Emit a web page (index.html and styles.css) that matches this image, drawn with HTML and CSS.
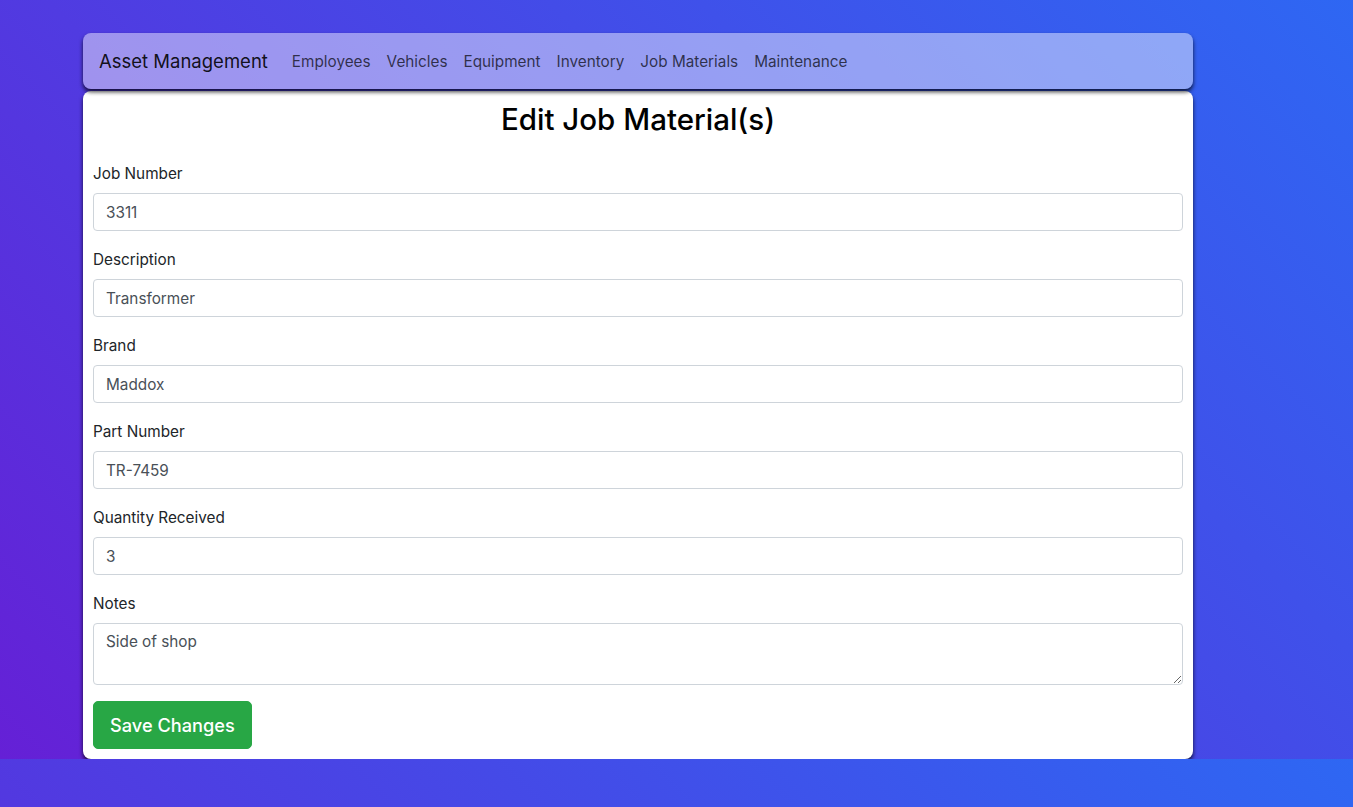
FILE: index.html
```html
<!DOCTYPE html>
<html lang="en">
<head>
<meta charset="utf-8">
<title>Edit Job Material(s)</title>
<link rel="stylesheet" href="styles.css">
</head>
<body>
<div class="container">
  <nav class="navbar">
    <a class="brand" href="#">Asset Management</a>
    <ul class="nav-links">
      <li><a href="#">Employees</a></li>
      <li><a href="#">Vehicles</a></li>
      <li><a href="#">Equipment</a></li>
      <li><a href="#">Inventory</a></li>
      <li><a href="#">Job Materials</a></li>
      <li><a href="#">Maintenance</a></li>
    </ul>
  </nav>
  <main class="card">
    <h2 class="title">Edit Job Material(s)</h2>
    <form class="form">
      <div class="form-group">
        <label for="job">Job Number</label>
        <input id="job" class="form-control" type="text" value="3311">
      </div>
      <div class="form-group">
        <label for="desc">Description</label>
        <input id="desc" class="form-control" type="text" value="Transformer">
      </div>
      <div class="form-group">
        <label for="brand">Brand</label>
        <input id="brand" class="form-control" type="text" value="Maddox">
      </div>
      <div class="form-group">
        <label for="part">Part Number</label>
        <input id="part" class="form-control" type="text" value="TR-7459">
      </div>
      <div class="form-group">
        <label for="qty">Quantity Received</label>
        <input id="qty" class="form-control" type="text" value="3">
      </div>
      <div class="form-group">
        <label for="notes">Notes</label>
        <textarea id="notes" class="form-control textarea" rows="2">Side of shop</textarea>
      </div>
      <button type="button" class="btn-save">Save Changes</button>
    </form>
  </main>
</div>
</body>
</html>
```
FILE: styles.css
```css
* { box-sizing: border-box; }
body {
  margin: 0;
  padding-top: 33px;
  font-family: "Inter", "Liberation Sans", sans-serif;
  font-size: 15.3px;
  line-height: 1.5;
  color: #212529;
  background: linear-gradient(45deg, #6520d6 0%, #2e67f3 100%);
}
.container {
  width: 1110px;
  margin-left: 83px;
}
.navbar {
  display: flex;
  align-items: center;
  height: 56px;
  padding: 8px 16px;
  border-radius: 8px;
  background: rgba(255, 255, 255, 0.45);
  box-shadow: 0 3px 4px rgba(0, 0, 0, 0.75);
  position: relative;
  z-index: 1;
}
.brand {
  font-size: 18.5px;
  line-height: 30px;
  color: rgba(0, 0, 0, 0.9);
  text-decoration: none;
  margin-right: 16px;
}
.nav-links {
  display: flex;
  list-style: none;
  margin: 0;
  padding: 0;
}
.nav-links a {
  display: block;
  padding: 9px 8px 7px;
  font-size: 15.3px;
  color: rgba(0, 0, 0, 0.7);
  text-decoration: none;
}
.card {
  margin-top: 2px;
  background: #fff;
  border-radius: 8px;
  padding: 10px;
  box-shadow: 0 3px 4px rgba(0, 0, 0, 0.75);
}
.title {
  margin: 0 0 24px;
  text-align: center;
  font-size: 29.5px;
  line-height: 36px;
  font-weight: 500;
  color: #000;
}
.form-group {
  margin-bottom: 16px;
}
.form-group label {
  display: block;
  margin-bottom: 8px;
  padding-top: 1px;
  height: 24px;
  font-size: 15.3px;
  line-height: 24px;
}
.form-control {
  display: block;
  width: 100%;
  height: 38px;
  padding: 6px 12px;
  font-family: inherit;
  font-size: 15.3px;
  line-height: 24px;
  color: #495057;
  background: #fff;
  border: 1px solid #ced4da;
  border-radius: 4px;
}
.textarea {
  height: 62px;
  resize: vertical;
}
.btn-save {
  display: block;
  height: 48px;
  padding: 8px 16px;
  font-family: inherit;
  font-size: 18.2px;
  font-weight: 500;
  line-height: 30px;
  color: #fff;
  background: #28a745;
  border: 1px solid #28a745;
  border-radius: 5px;
}
```
